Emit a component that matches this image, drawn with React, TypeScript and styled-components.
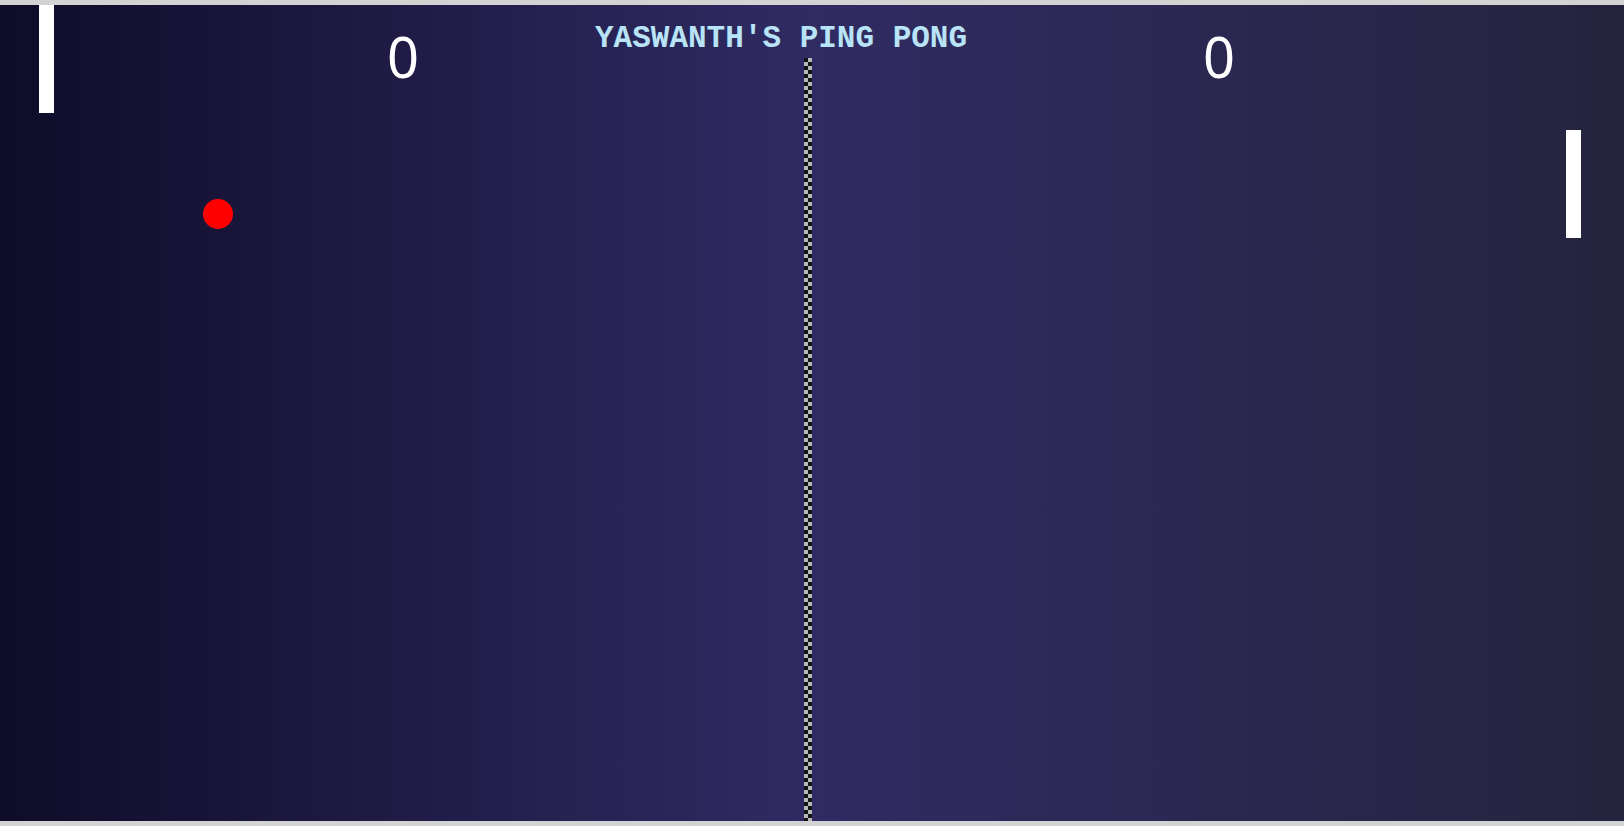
import React from "react";
import styled, { createGlobalStyle } from "styled-components";

const GlobalStyle = createGlobalStyle`
  html, body {
    margin: 0;
    padding: 0;
    background: #d3d3d3;
    overflow: hidden;
  }
`;

const Court = styled.div`
  position: relative;
  margin: 5px 0;
  height: 816px;
  width: 100%;
  background: linear-gradient(to right, #0f0c29, #302b63, #24243e);
  overflow: hidden;
`;

const Title = styled.h1`
  position: absolute;
  top: 18px;
  left: 595px;
  margin: 0;
  font-family: "Liberation Mono", "DejaVu Sans Mono", monospace;
  font-weight: 700;
  font-size: 31px;
  line-height: 1;
  color: #b9e3f6;
  white-space: nowrap;
`;

const ScoreRow = styled.div`
  display: grid;
  grid-template-columns: 806px 1fr;
  column-gap: 8px;
  padding-top: 23px;
`;

const Score = styled.div`
  text-align: center;
  font-family: "Noto Sans", "Open Sans", sans-serif;
  font-size: 56px;
  line-height: 1;
  color: #ffffff;
`;

const Net = styled.div`
  position: absolute;
  top: 53px;
  bottom: 0;
  left: 804px;
  width: 8px;
  background: repeating-conic-gradient(#b8b8b8 0 25%, #151515 0 50%) 0 0 / 8px 8px;
  filter: blur(0.4px);
`;

const Paddle = styled.div<{ $x: number; $y: number }>`
  position: absolute;
  left: ${(p) => p.$x}px;
  top: ${(p) => p.$y}px;
  width: 15px;
  height: 108px;
  background: #ffffff;
`;

const Ball = styled.div<{ $x: number; $y: number }>`
  position: absolute;
  left: ${(p) => p.$x}px;
  top: ${(p) => p.$y}px;
  width: 30px;
  height: 30px;
  border-radius: 50%;
  background: #ff0000;
`;

export default function App() {
  const scores = { left: 0, right: 0 };
  return (
    <>
      <GlobalStyle />
      <Court>
        <ScoreRow>
          <Score>{scores.left}</Score>
          <Score>{scores.right}</Score>
        </ScoreRow>
        <Title>YASWANTH'S PING PONG</Title>
        <Net />
        <Paddle $x={39} $y={0} />
        <Paddle $x={1566} $y={125} />
        <Ball $x={203} $y={194} />
      </Court>
    </>
  );
}
